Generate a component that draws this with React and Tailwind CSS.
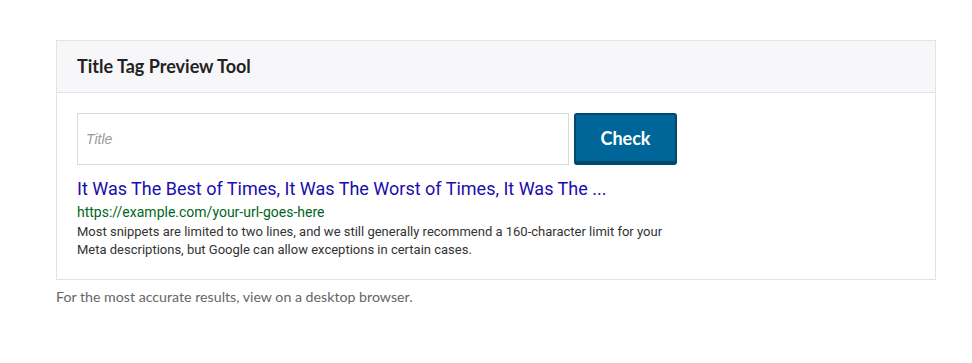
import React, { useState } from 'react';

export default function App() {
  const [title, setTitle] = useState('');

  return (
    <div className="bg-white min-h-screen pt-[40px] pl-[56px] font-['Lato',sans-serif]">
      <div className="w-[880px] border border-[#e3e3e6] bg-white">
        <div className="h-[52px] bg-[#f7f7f9] border-b border-[#e3e3e6] flex items-center px-[20px]">
          <h2 className="text-[18px] font-bold text-[#222]">Title Tag Preview Tool</h2>
        </div>
        <div className="px-[20px] pt-[20px] pb-[20px]">
          <div className="flex gap-[5px]">
            <input
              value={title}
              onChange={(e) => setTitle(e.target.value)}
              placeholder="Title"
              className="w-[492px] h-[52px] border border-[#d9dcde] px-[8px] text-[14px] font-['Liberation_Sans',sans-serif] placeholder:italic placeholder:text-[#999] outline-none"
            />
            <button className="w-[103px] h-[52px] bg-[#006699] border-2 border-b-4 border-[#00496d] rounded-[3px] text-white text-[18px] font-bold">
              Check
            </button>
          </div>
          <div className="mt-[12px] w-[600px] font-['Roboto',sans-serif]">
            <div className="text-[18px] leading-[24px] text-[#1a0dab]">
              It Was The Best of Times, It Was The Worst of Times, It Was The ...
            </div>
            <div className="text-[14px] leading-[20px] text-[#006621] mt-[1px]">https://example.com/your-url-goes-here</div>
            <p className="text-[13px] leading-[18px] text-[#333] mt-[1px]">
              Most snippets are limited to two lines, and we still generally recommend a 160-character limit for your Meta
              descriptions, but Google can allow exceptions in certain cases.
            </p>
          </div>
        </div>
      </div>
      <p className="mt-[6px] text-[14.2px] text-[#666]">For the most accurate results, view on a desktop browser.</p>
    </div>
  );
}
